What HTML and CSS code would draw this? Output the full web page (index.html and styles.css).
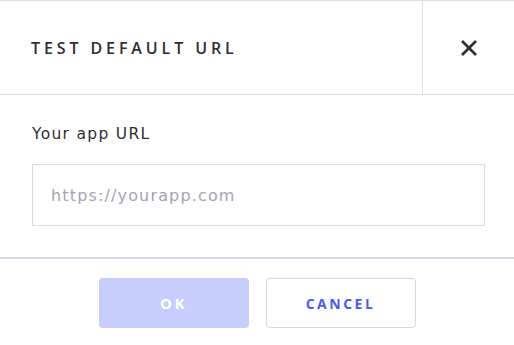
FILE: index.html
```html
<!DOCTYPE html>
<html lang="en">
<head>
<meta charset="utf-8">
<title>Test default URL</title>
<link rel="stylesheet" href="styles.css">
</head>
<body>
<div class="modal">
  <div class="modal-header">
    <h2 class="modal-title">TEST DEFAULT URL</h2>
    <button class="close-btn" aria-label="Close">
      <svg width="18" height="16" viewBox="0 0 18 16"><path d="M2 1 L16 15 M16 1 L2 15" stroke="#2d2d33" stroke-width="2.7" fill="none"/></svg>
    </button>
  </div>
  <div class="modal-body">
    <label class="field-label" for="url">Your app URL</label>
    <input class="field-input" id="url" type="text" placeholder="https://yourapp.com">
  </div>
  <div class="modal-footer">
    <button class="btn btn-ok">OK</button>
    <button class="btn btn-cancel">CANCEL</button>
  </div>
</div>
</body>
</html>
```

FILE: styles.css
```css
html, body {
  margin: 0;
  padding: 0;
  background: #ffffff;
}
body {
  font-family: "DejaVu Sans", "Open Sans", sans-serif;
  color: #2d2d33;
}
.modal {
  width: 514px;
  border-top: 1px solid #dcdce6;
}
.modal-header {
  display: flex;
  height: 93px;
  border-bottom: 1px solid #dcdce6;
}
.modal-title {
  flex: 1;
  margin: 0;
  padding-left: 31px;
  display: flex;
  align-items: center;
  font-family: "Open Sans", sans-serif;
  font-weight: 600;
  font-size: 16px;
  letter-spacing: 3.9px;
  color: #2d2d33;
}
.close-btn {
  width: 92px;
  border: none;
  border-left: 1px solid #dcdce6;
  background: transparent;
  display: flex;
  align-items: center;
  justify-content: center;
  padding: 0;
}
.modal-body {
  display: flex;
  flex-direction: column;
  padding: 29px 29px 31px 32px;
  border-bottom: 2px solid #d6d9e6;
}
.field-label {
  font-size: 15.5px;
  line-height: 20px;
  letter-spacing: 1.3px;
  color: #2d2d33;
  margin-bottom: 20px;
}
.field-input {
  height: 62px;
  box-sizing: border-box;
  border: 1px solid #d6d8e6;
  border-radius: 0;
  padding: 0 18px;
  font-family: "DejaVu Sans", sans-serif;
  font-size: 16px;
  letter-spacing: 1.15px;
  outline: none;
  color: #2d2d33;
}
.field-input::placeholder {
  color: #a4a3b3;
}
.modal-footer {
  display: flex;
  justify-content: center;
  gap: 17px;
  padding-top: 19px;
}
.btn {
  width: 150px;
  height: 50px;
  border-radius: 4px;
  font-family: "Open Sans", sans-serif;
  font-weight: 700;
  font-size: 14px;
  letter-spacing: 2.5px;
  cursor: pointer;
}
.btn-ok {
  background: #c7cdfd;
  border: none;
  color: #ffffff;
  font-size: 15px;
}
.btn-cancel {
  background: #ffffff;
  border: 1px solid #d6d6e0;
  color: #4c5af5;
}
```
